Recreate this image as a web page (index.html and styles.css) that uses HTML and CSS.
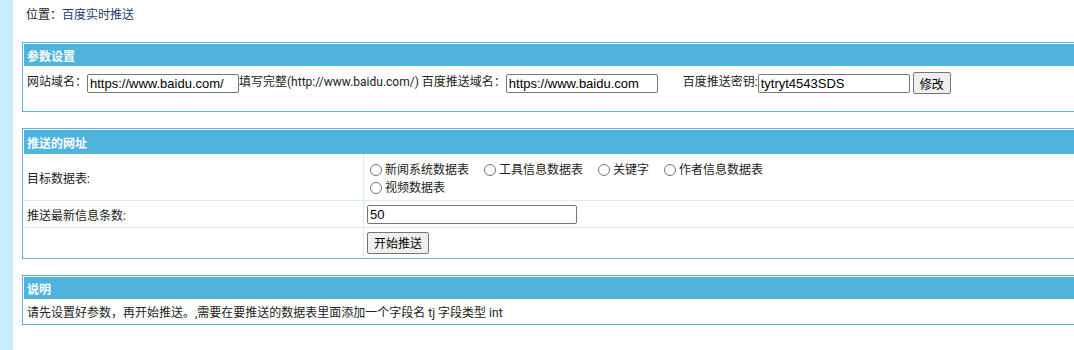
FILE: index.html
```html
<!DOCTYPE html>
<html lang="zh-CN">
<head>
  <meta charset="UTF-8" />
  <title>百度实时推送</title>
  <link rel="stylesheet" href="styles.css">
</head>
<body>
  <div class="sidebar"></div>
  <div class="main">
    <div class="crumb">位置：<a href="#">百度实时推送</a></div>

    <table class="tb">
      <tr><th>参数设置</th></tr>
      <tr>
        <td class="cfg">
          网站域名：<input type="text" class="txt" value="https://www.baidu.com/" />填写完整(http://www.baidu.com/) 百度推送域名：<input type="text" class="txt" value="https://www.baidu.com" />
          <span class="gap"></span>百度推送密钥:<input type="text" class="txt" value="tytryt4543SDS" />
          <button class="btn">修改</button>
        </td>
      </tr>
    </table>

    <table class="tb">
      <tr><th colspan="2" class="hd2">推送的网址</th></tr>
      <tr class="r1">
        <td class="lbl">目标数据表:</td>
        <td class="val">
          <label><input type="radio" name="t" />新闻系统数据表</label>
          <label><input type="radio" name="t" />工具信息数据表</label>
          <label><input type="radio" name="t" />关键字</label>
          <label><input type="radio" name="t" />作者信息数据表</label><br>
          <label><input type="radio" name="t" />视频数据表</label>
        </td>
      </tr>
      <tr class="r2">
        <td class="lbl">推送最新信息条数:</td>
        <td class="val"><input type="text" class="num" value="50" /></td>
      </tr>
      <tr class="r3">
        <td class="lbl"></td>
        <td class="val"><button class="btn">开始推送</button></td>
      </tr>
    </table>

    <table class="tb">
      <tr><th>说明</th></tr>
      <tr>
        <td class="note">请先设置好参数，再开始推送。,需要在要推送的数据表里面添加一个字段名 tj 字段类型 int</td>
      </tr>
    </table>
  </div>
</body>
</html>
```

FILE: styles.css
```css
html, body {
  margin: 0;
  overflow: hidden;
}

body {
  display: flex;
  font-family: Roboto, "Noto Sans CJK SC", sans-serif;
  font-size: 12px;
  color: #222;
  background: #fff;
  min-height: 350px;
}

.sidebar {
  width: 13px;
  flex: none;
  background: #c8eefc;
}

.main {
  flex: none;
  width: 1062px;
  padding: 0 0 0 9px;
}

.crumb {
  height: 42px;
  line-height: 30px;
  padding-left: 4px;
}

.crumb a {
  color: #1d3d6b;
  text-decoration: none;
}

.tb {
  width: 1070px;
  border: 1px solid #5ab5dc;
  border-collapse: separate;
  border-spacing: 0;
  padding: 1px;
  margin-bottom: 16px;
}

.tb th {
  background: #4fb3dc;
  color: #fff;
  font-weight: bold;
  text-align: left;
  height: 22px;
  padding: 0 3px;
}

.tb th.hd2 {
  height: 24px;
}

.tb td {
  padding: 0 3px;
}

.cfg {
  height: 38px;
  vertical-align: top;
  padding-top: 6px !important;
}

.txt {
  width: 146px;
  height: 15px;
  padding: 1px 2px;
  margin: 0;
  border: 1px solid #767676;
  border-radius: 2px;
  font: 13px "Liberation Sans", "Noto Sans CJK SC", sans-serif;
  vertical-align: middle;
}

.gap {
  display: inline-block;
  width: 22px;
}

.btn {
  height: 22px;
  padding: 0 6px;
  font: 12px Roboto, "Noto Sans CJK SC", sans-serif;
  background: #efefef;
  border: 1px solid #767676;
  border-radius: 2px;
  vertical-align: middle;
}

.lbl {
  width: 333px;
  border-right: 1px solid #d8ecf6;
}

.r1 td {
  height: 43px;
  border-bottom: 1px solid #d8ecf6;
}

.r1 .val {
  padding-top: 3px;
}

.r2 td {
  height: 26px;
  border-bottom: 1px solid #d8ecf6;
}

.r3 td {
  height: 29px;
}

.val {
  line-height: 18px;
}

.val label {
  margin-right: 9px;
}

.val input[type="radio"] {
  width: 12px;
  height: 12px;
  margin: 0 3px 0 3px;
  vertical-align: -2px;
}

.num {
  width: 204px;
  height: 15px;
  padding: 1px 2px;
  margin: 0;
  border: 1px solid #767676;
  border-radius: 2px;
  font: 13px "Liberation Sans", "Noto Sans CJK SC", sans-serif;
}

.note {
  height: 24px;
}
```
